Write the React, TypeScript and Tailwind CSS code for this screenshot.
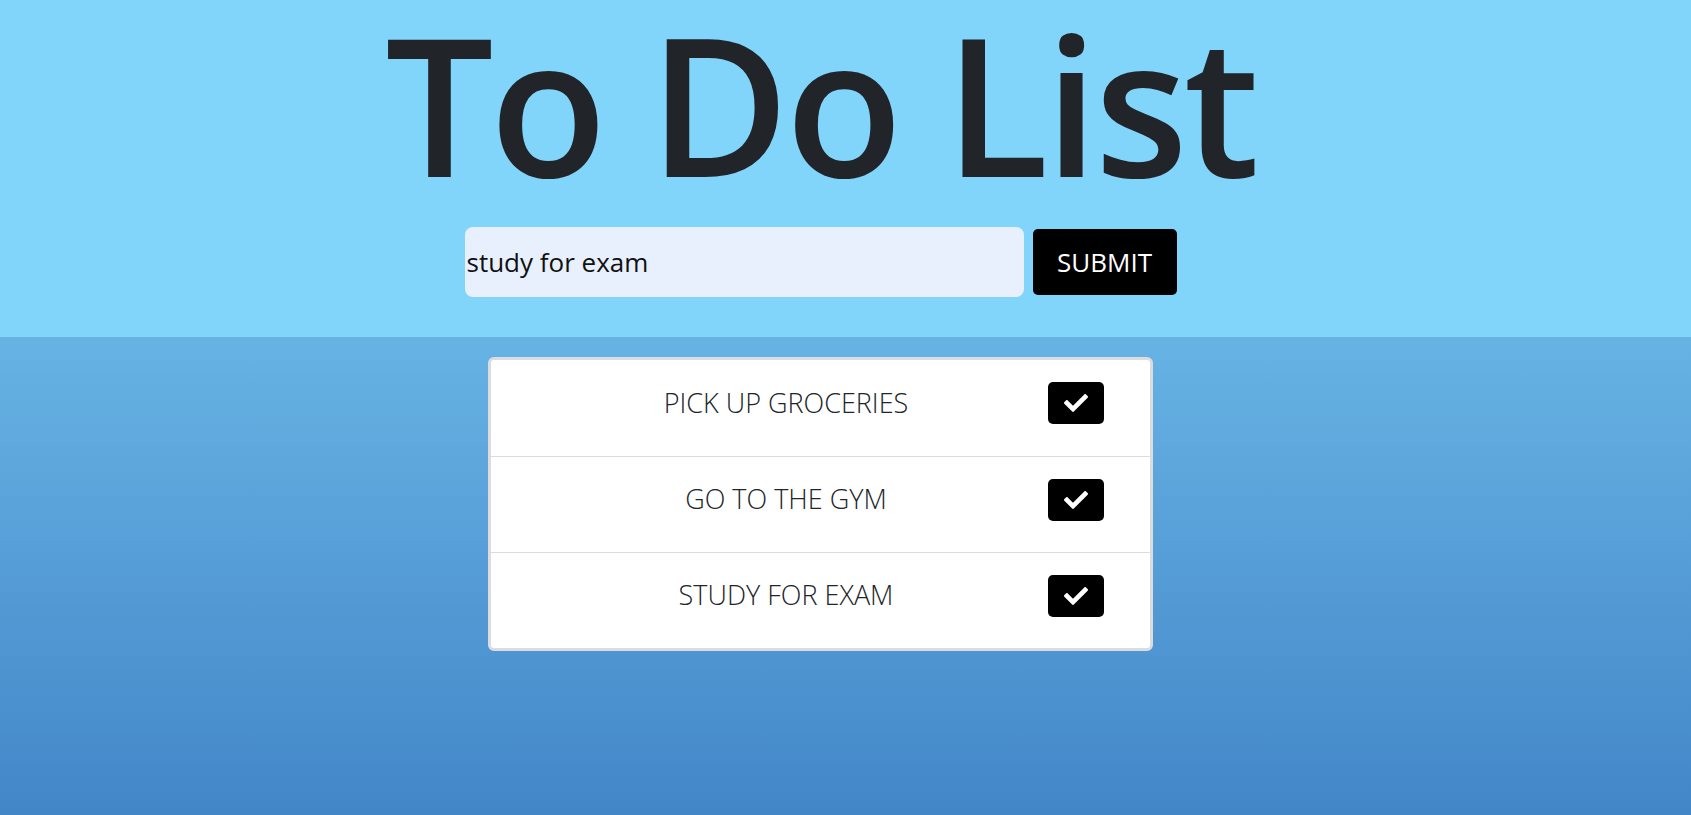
import React from "react";

const items = ["PICK UP GROCERIES", "GO TO THE GYM", "STUDY FOR EXAM"];

function Check() {
  return (
    <svg width="24" height="18" viewBox="0 64 512 384" fill="white">
      <path d="M173.898 439.404l-166.4-166.4c-9.997-9.997-9.997-26.206 0-36.204l36.203-36.204c9.997-9.998 26.207-9.998 36.204 0L192 312.69 432.095 72.596c9.997-9.997 26.207-9.997 36.204 0l36.203 36.204c9.997 9.997 9.997 26.206 0 36.204l-294.4 294.401c-9.998 9.997-26.207 9.997-36.204-.001z" />
    </svg>
  );
}

export default function App() {
  return (
    <div
      className="flex h-[815px] flex-col overflow-hidden"
      style={{ fontFamily: '"Open Sans", "Noto Sans", sans-serif' }}
    >
      <header className="flex h-[337px] shrink-0 flex-col bg-[#81d4fa] pr-[50px]">
        <h1 className="-mt-[32px] text-center text-[192px] font-semibold leading-[269px] tracking-[-4px] text-[#212529]">
          To Do List
        </h1>
        <div className="-mt-[10px] flex items-center justify-center gap-[9px]">
          <input
            defaultValue="study for exam"
            className="h-[70px] w-[559px] rounded-[8px] bg-[#e8f0fe] pl-[2px] text-[26px] text-[#111] outline-none"
          />
          <button className="h-[66px] w-[144px] rounded-[5px] bg-black text-[26px] text-white">
            SUBMIT
          </button>
        </div>
      </header>
      <main className="flex-1 bg-gradient-to-b from-[#67b3e4] to-[#4386c8] pr-[50px] pt-[20px]">
        <div className="mx-auto w-[665px] rounded-[6px] border-[3px] border-[#dcdcdf] bg-white">
          {items.map((t, i) => (
            <div
              key={t}
              className={`flex h-[96px] items-center pb-[10px] ${i > 0 ? "border-t border-[#dcdcdf]" : ""}`}
            >
              <div className="ml-[55px] w-[480px] text-center text-[27px] font-[350] text-[#212529]">
                {t}
              </div>
              <div className="ml-[22px] flex h-[42px] w-[56px] items-center justify-center rounded-[5px] bg-black">
                <Check />
              </div>
            </div>
          ))}
        </div>
      </main>
    </div>
  );
}
